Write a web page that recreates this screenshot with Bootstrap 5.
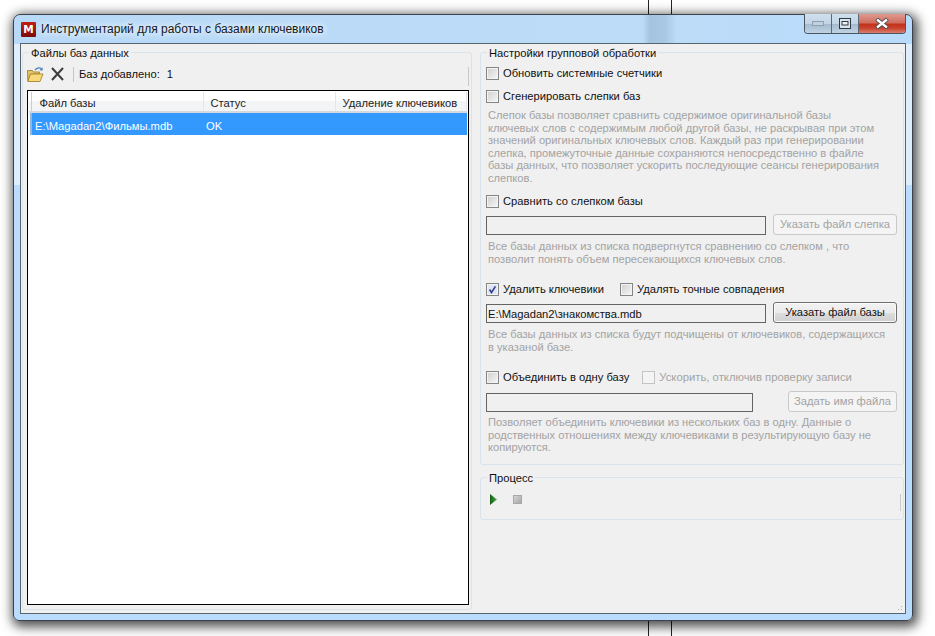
<!DOCTYPE html>
<html lang="ru"><head><meta charset="utf-8"><title>Инструментарий</title>
<link href="https://cdn.jsdelivr.net/npm/bootstrap@5.3.0/dist/css/bootstrap.min.css" rel="stylesheet">
<style>
html,body{margin:0;height:636px;width:935px;overflow:hidden;background:#fff;font-family:"Liberation Sans",Arial,sans-serif;font-size:11.2px;line-height:12.5px;color:#111}
.desk{position:relative;width:935px;height:636px;padding:14px 22px 15px 13px}
.bgline{position:absolute;top:0;bottom:0;width:1px;background:#222}
.bgline.a{left:648px}.bgline.b{left:671px}
.win{position:relative;width:900px;height:607px;border:1px solid #3a4148;border-radius:7px 7px 6px 6px;padding:0 6px 6px;
 background:linear-gradient(90deg,#b8d9f7 0,#bcdcf8 70%,#a5c4e0 70.8%,#a9c8e3 72.5%,#bcdcf8 73.8%,#b9dbfb 100%) 0 0/100% 29px no-repeat,linear-gradient(#dfeefd 0,#dfeefd 170px,#b9dcff 170px,#b9dcff 100%);
 box-shadow:2px 3px 11px 3px rgba(0,0,0,.68)}
.tbar{height:28px;gap:5px;padding-left:1px}
.logo{width:15px;height:15px;background:linear-gradient(#c21d12,#7c0a05);color:#fff;font:bold 10.5px/15px "DejaVu Sans",sans-serif;text-align:center;border-radius:1px;margin-top:1px}
.ttl{font-family:"Liberation Sans",sans-serif;font-size:12px;color:#15181c;line-height:15px;margin-top:1px;text-shadow:0 0 7px #fff,0 0 7px #fff}
.caps{position:absolute;top:-1px;right:6px;height:20px;width:102px;border:1px solid #4a5560;border-top:0;border-radius:0 0 4px 4px;overflow:hidden}
.cap{height:19px;border-right:1px solid #5d6a76;background:linear-gradient(#cfdfee 0,#c3d5e6 50%,#a4b9cd 52%,#c0d3e5 100%)}
.cap.m{width:27px}.cap.r{width:27px}
.cap.x{flex:1;border:0;background:linear-gradient(#e09a90 0,#cf6f60 45%,#c5321c 55%,#c9442f 75%,#d98070 100%)}
.client{height:571px;width:886px;background:#f0f0f0;border:1px solid #59646e;position:relative;padding:8px 1px 0}
.gbox{position:relative;border:1px solid #d9e3eb;border-radius:3px}
.legendx{position:absolute;top:-6px;left:6px;padding:0 2px;background:#f0f0f0;line-height:12px;color:#111}
.gleft{width:452px;height:558px;margin-right:8px}
.gright{width:424px;height:413px;padding:14px 0 0 5px}
.gproc{width:424px;height:43px;margin-top:12px}
.tools{height:29px;padding:13px 4px 0 4px}
.tool-sep{width:1px;height:15px;background:#c6c6c6;margin:0 5px 0 9px}
.grip{position:absolute;right:2px;width:1px;background:#c9c9c9}
.listx{position:absolute;left:4px;top:37px;width:442px;height:515px;border:1px solid #000;padding:1px;background:#fff;overflow:hidden}
.listx .table{--bs-table-bg:transparent;margin:0;table-layout:fixed;font-size:11.2px;color:#222;width:438px}
.listx th{font-weight:400;height:20px;padding:2px 0 0 7px;line-height:14px;vertical-align:middle;background:linear-gradient(#fff 0,#fff 45%,#f3f4f6 50%,#f3f4f6 100%);border-right:1px solid #e3e6ea!important;border-bottom:2px solid #d5d9dd!important;color:#222}
.listx th.g{width:2px;padding:0;border-right:1px solid #c9ced3!important}
.listx th.first{width:172px;padding-left:8px}
.listx td{height:23px;padding:3px 0 0 3px;background:#39f;color:#fff;vertical-align:middle;line-height:14px}
.listx td.g{background:#fff;border-right:2px solid #8fb8dc;padding:0}
.listx td.st{padding-left:3px}
.chk{gap:4px;height:13px;align-items:center;line-height:13px;white-space:nowrap;font-size:11.2px}
.chk-row-a{margin-top:18px;gap:16px}
.chk-row-b{margin-top:18px;gap:13px}
.form-check-input.bx{width:13px;height:13px;margin:0;flex:none;border:1px solid #858585;border-radius:0;background:linear-gradient(135deg,#cfcfcf,#f6f6f6);box-shadow:inset 0 0 0 1px #f4f4f4}
.form-check-input.bx:checked{background-color:#dfe6f2;background-image:url("data:image/svg+xml,%3Csvg xmlns='http://www.w3.org/2000/svg' viewBox='0 0 13 13'%3E%3Cpath d='M3 6.5 5.3 10 10 2.8' fill='none' stroke='%23353f8e' stroke-width='1.9'/%3E%3C/svg%3E")}
.form-check-input.bx:disabled{opacity:1;background:#f4f4f4;border-color:#c4c4c4;box-shadow:none}
.muted{color:#a4a4a4;font-size:11.3px}
.descr{color:#a3a3a3;padding-left:2px;margin:0;font-size:11.15px}
.ipt.form-control{height:19px;min-height:0;padding:0 0 0 1px;border:1px solid #646464;border-radius:0;background:#f0f0f0;font-size:11.2px;line-height:15px;color:#111;box-shadow:none}
.btnx.btn{height:21px;padding:0;font-size:11.2px;line-height:17px;border-radius:3px;border:1px solid #707070;color:#111;background:linear-gradient(#f2f2f2 0,#ebebeb 50%,#ddd 52%,#cfcfcf 100%);box-shadow:inset 0 0 0 1px #fafafa}
.btnx.btn:disabled{opacity:1;color:#a3a3a3;background:#f4f4f4;border-color:#c9c9c9;box-shadow:none}
.sizegrip{position:absolute;right:1px;bottom:1px;width:10px;height:10px;background:radial-gradient(circle,#b0b0b0 .8px,transparent 1px) 0 0/3px 3px;clip-path:polygon(100% 0,100% 100%,0 100%)}
</style></head><body>
<div class="desk">
 <div class="bgline a"></div><div class="bgline b"></div>
 <div class="win">
  <div class="tbar d-flex align-items-center">
   <div class="logo flex-none">M</div>
   <div class="ttl">Инструментарий для работы с базами ключевиков</div>
  </div>
  <div class="caps d-flex">
   <div class="cap m d-flex align-items-center justify-content-center"><svg width="13" height="7"><rect x=".5" y="1.5" width="11" height="4" fill="#c4d0dc" stroke="#8fa0b0"/></svg></div>
   <div class="cap r d-flex align-items-center justify-content-center"><svg width="12" height="11"><rect x=".5" y=".5" width="11" height="10" fill="#d8e4ee" stroke="#2f3a44"/><rect x="3" y="3.5" width="6" height="3.5" fill="#eef3f8" stroke="#2f3a44"/></svg></div>
   <div class="cap x d-flex align-items-center justify-content-center"><svg width="14" height="11"><path d="M1.5 1 L12.5 10 M12.5 1 L1.5 10" stroke="#39424c" stroke-width="4"/><path d="M2 1.5 L12 9.5 M12 1.5 L2 9.5" stroke="#fff" stroke-width="2.4"/></svg></div>
  </div>
  <div class="client d-flex">
   <div class="gbox gleft flex-none">
    <span class="legendx">Файлы баз данных</span>
    <div class="tools d-flex align-items-center">
     <svg width="17" height="15" viewBox="0 0 17 15"><path d="M.5 3.5h5l1 1.5h6v2H3.5L.8 14z" fill="#e9c56a" stroke="#a98a3d"/><path d="M3.5 7H16l-3 7.5H.8z" fill="#f8d97a" stroke="#b08d36"/><path d="M8 3C10 .8 12.5.6 14.5 1.6" fill="none" stroke="#4c7fb8" stroke-width="1.3"/><path d="M15.6 .2v3.4h-3.2z" fill="#4c7fb8"/></svg>
     <svg style="margin-left:7px" width="13" height="14" viewBox="0 0 13 14"><path d="M1 1 12 13M12 1 1 13" stroke="#3c3c3c" stroke-width="2"/></svg>
     <span class="tool-sep"></span><span>Баз добавлено:</span><span style="margin-left:7px">1</span>
    </div>
    <span class="grip" style="top:14px;height:19px"></span>
    <div class="listx">
     <table class="table table-borderless">
      <thead><tr><th class="g"></th><th class="first">Файл базы</th><th style="width:132px">Статус</th><th>Удаление ключевиков</th></tr></thead>
      <tbody><tr><td class="g"></td><td>E:\Magadan2\Фильмы.mdb</td><td class="st">OK</td><td></td></tr></tbody>
     </table>
    </div>
   </div>
   <div class="d-flex flex-column flex-none">
    <div class="gbox gright">
     <span class="legendx">Настройки групповой обработки</span>
     <label class="chk d-flex"><input type="checkbox" class="form-check-input bx"><span>Обновить системные счетчики</span></label>
     <label class="chk d-flex" style="margin-top:10px"><input type="checkbox" class="form-check-input bx"><span>Сгенерировать слепки баз</span></label>
     <p class="descr" style="margin-top:6px">Слепок базы позволяет сравнить содержимое оригинальной базы<br>ключевых слов с содержимым любой другой базы, не раскрывая при этом<br>значений оригинальных ключевых слов. Каждый раз при генерировании<br>слепка, промежуточные данные сохраняются непосредственно в файле<br>базы данных, что позволяет ускорить последующие сеансы генерирования<br>слепков.</p>
     <label class="chk d-flex" style="margin-top:11px"><input type="checkbox" class="form-check-input bx"><span>Сравнить со слепком базы</span></label>
     <div class="d-flex align-items-start" style="margin-top:6px">
      <input class="form-control ipt flex-none" style="width:280px;margin-top:2px" disabled>
      <button class="btn btnx flex-none" style="width:124px;margin-left:7px" disabled>Указать файл слепка</button>
     </div>
     <p class="descr" style="margin-top:5px">Все базы данных из списка подвергнутся сравнению со слепком , что<br>позволит понять объем пересекающихся ключевых слов.</p>
     <div class="d-flex chk-row-a">
      <label class="chk d-flex"><input type="checkbox" class="form-check-input bx" checked><span>Удалить ключевики</span></label>
      <label class="chk d-flex"><input type="checkbox" class="form-check-input bx"><span>Удалять точные совпадения</span></label>
     </div>
     <div class="d-flex align-items-start" style="margin-top:8px">
      <input class="form-control ipt flex-none" style="width:280px" value="E:\Magadan2\знакомства.mdb">
      <button class="btn btnx flex-none" style="width:124px;margin-left:7px;margin-top:-2px">Указать файл базы</button>
     </div>
     <p class="descr" style="margin-top:5px">Все базы данных из списка будут подчищены от ключевиков, содержащихся<br>в указаной базе.</p>
     <div class="d-flex chk-row-b">
      <label class="chk d-flex"><input type="checkbox" class="form-check-input bx"><span>Объединить в одну базу</span></label>
      <label class="chk d-flex"><input type="checkbox" class="form-check-input bx" disabled><span class="muted">Ускорить, отключив проверку записи</span></label>
     </div>
     <div class="d-flex align-items-start" style="margin-top:9px">
      <input class="form-control ipt flex-none" style="width:267px" disabled>
      <button class="btn btnx flex-none" style="width:109px;margin-left:35px;margin-top:-2px" disabled>Задать имя файла</button>
     </div>
     <p class="descr" style="margin-top:4px">Позволяет объединить ключевики из нескольких баз в одну. Данные о<br>родственных отношениях между ключевиками в результирующую базу не<br>копируются.</p>
    </div>
    <div class="gbox gproc">
     <span class="legendx">Процесс</span>
     <div class="d-flex align-items-center" style="padding:16px 0 0 9px">
      <svg width="7" height="11" viewBox="0 0 7 11"><defs><linearGradient id="pg" x1="0" x2="1"><stop offset="0" stop-color="#155c15"/><stop offset="1" stop-color="#4fae4f"/></linearGradient></defs><path d="M0 0 7 5.5 0 11z" fill="url(#pg)"/></svg>
      <svg style="margin-left:16px" width="9" height="9"><defs><linearGradient id="sg" x1="0" y1="0" x2="1" y2="1"><stop offset="0" stop-color="#d8d8d8"/><stop offset="1" stop-color="#a4a4a4"/></linearGradient></defs><rect x=".5" y=".5" width="8" height="8" fill="url(#sg)" stroke="#a8a8a8"/></svg>
     </div>
     <span class="grip" style="top:16px;height:17px"></span>
    </div>
   </div>
   <span class="sizegrip"></span>
  </div>
 </div>
</div>
</body></html>
